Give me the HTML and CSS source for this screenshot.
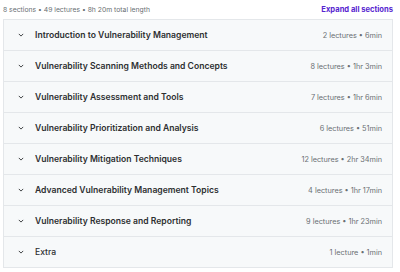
FILE: index.html
```html
<!DOCTYPE html>
<html lang="en">
<head>
  <meta charset="UTF-8" />
  <title>Course content</title>
  <link rel="stylesheet" href="styles.css">
</head>
<body>

  <div class="summary">
    <span>8 sections • 49 lectures • 8h 20m total length</span>
    <a class="expand" href="#">Expand all sections</a>
  </div>

  <div class="sections">
    <div class="section">
      <span class="chev"><svg width="8" height="8" viewBox="0 0 8 8"><path d="M1.8 2.9 4 5.1 6.2 2.9" fill="none" stroke="#2d2f31" stroke-width="0.9"/></svg></span>
      <span class="title">Introduction to Vulnerability Management</span>
      <span class="meta">2 lectures • 6min</span>
    </div>
    <div class="section">
      <span class="chev"><svg width="8" height="8" viewBox="0 0 8 8"><path d="M1.8 2.9 4 5.1 6.2 2.9" fill="none" stroke="#2d2f31" stroke-width="0.9"/></svg></span>
      <span class="title">Vulnerability Scanning Methods and Concepts</span>
      <span class="meta">8 lectures • 1hr 3min</span>
    </div>
    <div class="section">
      <span class="chev"><svg width="8" height="8" viewBox="0 0 8 8"><path d="M1.8 2.9 4 5.1 6.2 2.9" fill="none" stroke="#2d2f31" stroke-width="0.9"/></svg></span>
      <span class="title">Vulnerability Assessment and Tools</span>
      <span class="meta">7 lectures • 1hr 6min</span>
    </div>
    <div class="section">
      <span class="chev"><svg width="8" height="8" viewBox="0 0 8 8"><path d="M1.8 2.9 4 5.1 6.2 2.9" fill="none" stroke="#2d2f31" stroke-width="0.9"/></svg></span>
      <span class="title">Vulnerability Prioritization and Analysis</span>
      <span class="meta">6 lectures • 51min</span>
    </div>
    <div class="section">
      <span class="chev"><svg width="8" height="8" viewBox="0 0 8 8"><path d="M1.8 2.9 4 5.1 6.2 2.9" fill="none" stroke="#2d2f31" stroke-width="0.9"/></svg></span>
      <span class="title">Vulnerability Mitigation Techniques</span>
      <span class="meta">12 lectures • 2hr 34min</span>
    </div>
    <div class="section">
      <span class="chev"><svg width="8" height="8" viewBox="0 0 8 8"><path d="M1.8 2.9 4 5.1 6.2 2.9" fill="none" stroke="#2d2f31" stroke-width="0.9"/></svg></span>
      <span class="title">Advanced Vulnerability Management Topics</span>
      <span class="meta">4 lectures • 1hr 17min</span>
    </div>
    <div class="section">
      <span class="chev"><svg width="8" height="8" viewBox="0 0 8 8"><path d="M1.8 2.9 4 5.1 6.2 2.9" fill="none" stroke="#2d2f31" stroke-width="0.9"/></svg></span>
      <span class="title">Vulnerability Response and Reporting</span>
      <span class="meta">9 lectures • 1hr 23min</span>
    </div>
    <div class="section">
      <span class="chev"><svg width="8" height="8" viewBox="0 0 8 8"><path d="M1.8 2.9 4 5.1 6.2 2.9" fill="none" stroke="#2d2f31" stroke-width="0.9"/></svg></span>
      <span class="title extra">Extra</span>
      <span class="meta">1 lecture • 1min</span>
    </div>
  </div>

</body>
</html>
```

FILE: styles.css
```css
body {
  margin: 0;
  padding: 0 7px 0 3px;
  font-family: Inter, "Liberation Sans", sans-serif;
  color: #2d2f31;
  background-color: white;
}

.summary {
  display: flex;
  justify-content: space-between;
  align-items: center;
  height: 19px;
  font-size: 6.8px;
  color: #6a6f73;
}

.expand {
  color: #5624d0;
  font-weight: 700;
  text-decoration: none;
  font-size: 7.6px;
}

.sections {
  border: 1px solid #e4e7ea;
  border-bottom: none;
}

.section {
  display: flex;
  align-items: center;
  height: 30px;
  padding: 0 10px 0 13px;
  background-color: #f7f9fa;
  border-bottom: 1px solid #e4e7ea;
}

.chev {
  display: flex;
  width: 8px;
  margin-right: 10px;
}

.title {
  flex: 1;
  font-size: 8.6px;
  font-weight: 600;
}

.title.extra {
  font-weight: 500;
}

.meta {
  font-size: 7.3px;
  color: #6a6f73;
}
```
